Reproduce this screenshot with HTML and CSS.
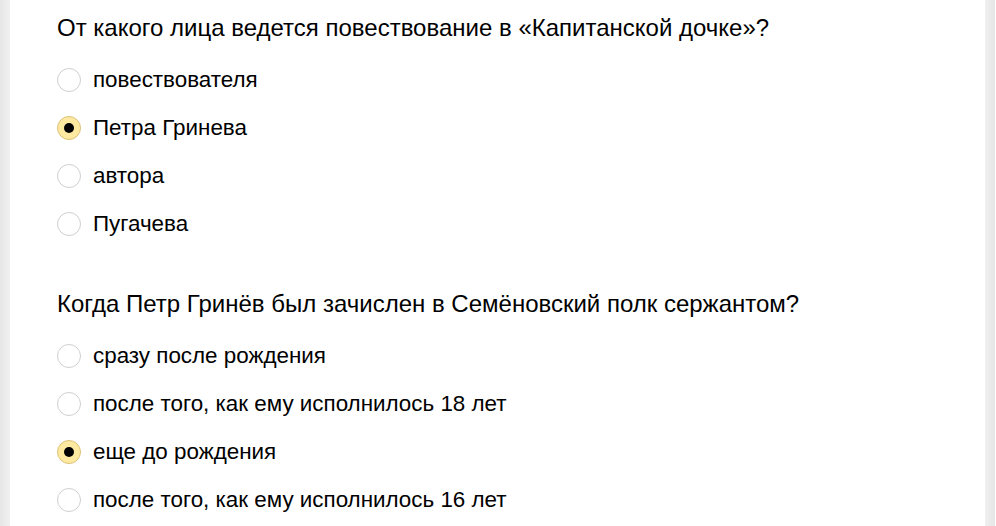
FILE: index.html
```html
<!DOCTYPE html>
<html>
  <head>
    <meta charset="utf-8" />
    <title>Тест по «Капитанской дочке»</title>
    <link rel="stylesheet" href="styles.css">
  </head>
  <body>
    <div class="page">
      <div class="question">
        <p class="question-title">От какого лица ведется повествование в «Капитанской дочке»?</p>
        <label class="option">
          <input type="radio" name="q1" value="1" />
          <span>повествователя</span>
        </label>
        <label class="option">
          <input type="radio" name="q1" value="2" checked />
          <span>Петра Гринева</span>
        </label>
        <label class="option">
          <input type="radio" name="q1" value="3" />
          <span>автора</span>
        </label>
        <label class="option">
          <input type="radio" name="q1" value="4" />
          <span>Пугачева</span>
        </label>
      </div>

      <div class="question">
        <p class="question-title">Когда Петр Гринёв был зачислен в Семёновский полк сержантом?</p>
        <label class="option">
          <input type="radio" name="q2" value="1" />
          <span>сразу после рождения</span>
        </label>
        <label class="option">
          <input type="radio" name="q2" value="2" />
          <span>после того, как ему исполнилось 18 лет</span>
        </label>
        <label class="option">
          <input type="radio" name="q2" value="3" checked />
          <span>еще до рождения</span>
        </label>
        <label class="option">
          <input type="radio" name="q2" value="4" />
          <span>после того, как ему исполнилось 16 лет</span>
        </label>
      </div>
    </div>
  </body>
</html>
```

FILE: styles.css
```css
html,
body {
  height: 100%;
}

body {
  margin: 0;
  background: linear-gradient(to right, #e6e6e6, #f0f0f0 10px, #f0f0f0 calc(100% - 11px), #e6e6e6 calc(100% - 1px), #fff calc(100% - 1px));
  font-family: Arial, "Liberation Sans", sans-serif;
  color: #000;
}

.page {
  margin: 0 11px 0 10px;
  min-height: 100%;
  background-color: #fff;
  padding: 16px 47px 0;
  box-sizing: border-box;
}

.question {
  margin-bottom: 44px;
}

.question-title {
  margin: 0 0 16px;
  font-size: 24px;
  line-height: 24px;
}

.option {
  display: flex;
  align-items: center;
  height: 48px;
  font-size: 22.4px;
  cursor: pointer;
}

.option input {
  appearance: none;
  -webkit-appearance: none;
  margin: 0 12px 0 0;
  width: 24px;
  height: 24px;
  border-radius: 50%;
  border: 1px solid #cfcfcf;
  background-color: #fff;
  box-sizing: border-box;
  display: flex;
  align-items: center;
  justify-content: center;
  flex-shrink: 0;
}

.option input:checked {
  background-color: #fee9a1;
  border-color: #dcc27a;
}

.option input:checked::after {
  content: '';
  width: 10px;
  height: 10px;
  border-radius: 50%;
  background-color: #000;
}
```
